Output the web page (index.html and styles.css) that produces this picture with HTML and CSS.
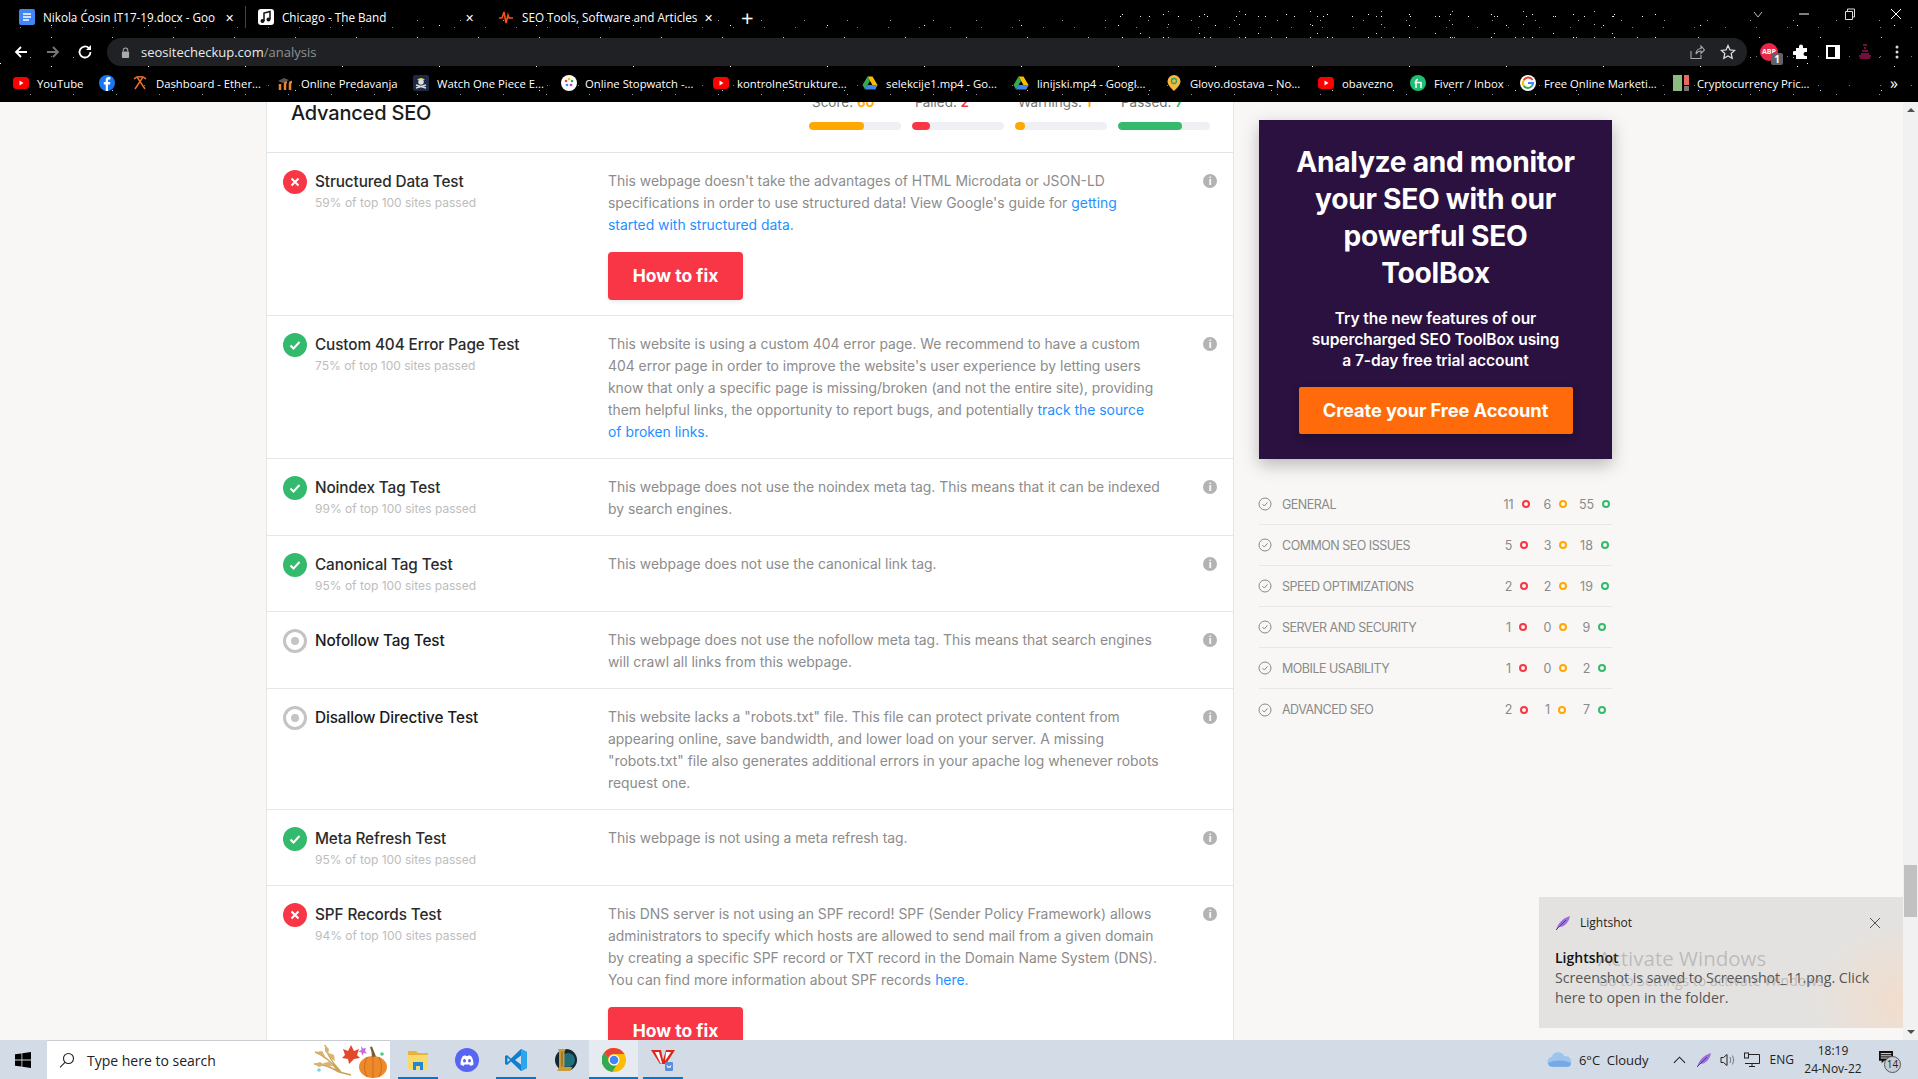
FILE: index.html
```html
<!DOCTYPE html>
<html lang="en">
<head>
  <meta charset="UTF-8" />
  <title>SEO Tools, Software and Articles</title>
  <link rel="stylesheet" href="styles.css">
</head>
<body>
  <!-- Browser chrome -->
  <header class="browser">
    <div class="tabs">
      <div class="tab tab-doc">
        <svg class="fav" viewBox="0 0 16 16"><rect width="16" height="16" rx="2" fill="#4285f4"/><path d="M4 5h8M4 8h8M4 11h6" stroke="#fff" stroke-width="1.4"/></svg>
        <span class="tab-title">Nikola Ćosin IT17-19.docx - Goo</span><span class="tab-x">✕</span>
      </div>
      <div class="tab tab-band">
        <svg class="fav" viewBox="0 0 16 16"><rect width="16" height="16" rx="3" fill="#fff"/><path d="M6 12V4l6-1.500V10" fill="none" stroke="#111" stroke-width="1.500"/><circle cx="4.500" cy="12" r="2" fill="#111"/><circle cx="10.500" cy="10.500" r="2" fill="#111"/></svg>
        <span class="tab-title">Chicago - The Band</span><span class="tab-x">✕</span>
      </div>
      <div class="tab tab-seo">
        <svg class="fav" viewBox="0 0 16 16"><path d="M1 9h3l2-6 2 11 2-8 1 3h4" fill="none" stroke="#f4511e" stroke-width="1.600"/></svg>
        <span class="tab-title">SEO Tools, Software and Articles</span><span class="tab-x">✕</span>
      </div>
      <span class="tab-plus">+</span>
      <div class="win-controls">
        <svg viewBox="0 0 12 12"><path d="M2 4l4 5 4-5" fill="none" stroke="#bbb"/></svg>
        <svg viewBox="0 0 12 12"><path d="M1 6h10" stroke="#fff"/></svg>
        <svg viewBox="0 0 12 12"><path d="M1.500 3.500h7v8h-7zM3.500 3V1h7v8H9" fill="none" stroke="#ddd"/></svg>
        <svg viewBox="0 0 12 12"><path d="M1 1l10 10M11 1L1 11" stroke="#fff"/></svg>
      </div>
    </div>
    <div class="toolbar">
      <svg class="nav" viewBox="0 0 16 16"><path d="M14 8H3M8 3L3 8l5 5" fill="none" stroke="#fff" stroke-width="1.800"/></svg>
      <svg class="nav" viewBox="0 0 16 16"><path d="M2 8h11M8 3l5 5-5 5" fill="none" stroke="#777" stroke-width="1.800"/></svg>
      <svg class="nav" viewBox="0 0 16 16"><path d="M13.500 8a5.500 5.500 0 1 1-1.600-3.900" fill="none" stroke="#fff" stroke-width="1.800"/><path d="M14 1v5H9z" fill="#fff"/></svg>
      <div class="omnibox">
        <svg class="lock" viewBox="0 0 10 12"><path d="M2.500 5V3.500a2.500 2.500 0 0 1 5 0V5" fill="none" stroke="#aaa" stroke-width="1.200"/><rect x="1" y="5" width="8" height="7" rx="1" fill="#aaa"/></svg>
        <span class="url">seositecheckup.com<span class="url-path">/analysis</span></span>
        <svg class="omni-icon" viewBox="0 0 16 16"><path d="M2 7v7.500h10V11M7 10c0-3.500 2.500-5.500 5-5.500V2l3.500 4L12 9.500V7C10 7 8 8 7 10z" fill="none" stroke="#aaa" stroke-width="1.100"/></svg>
        <svg class="omni-icon" viewBox="0 0 16 16"><path d="M8 1.500l2 4.400 4.700.5-3.500 3.200 1 4.700L8 11.900l-4.200 2.400 1-4.700-3.500-3.200 4.700-.5z" fill="none" stroke="#ddd" stroke-width="1.300"/></svg>
      </div>
      <div class="ext-icons">
        <span class="abp">ABP<span class="abp-count">1</span></span>
        <svg viewBox="0 0 16 16"><path d="M6 2.500a2 2 0 0 1 4 0V4h4v4h-1.500a2 2 0 0 0 0 4H14v3H3v-4H1.500a2 2 0 0 1 0-4H3V4h3z" fill="#fff"/></svg>
        <svg viewBox="0 0 16 16"><path d="M1 1h14v14H1z" fill="#fff"/><path d="M3 3h7v10H3z" fill="#000"/></svg>
        <svg viewBox="0 0 16 16"><path d="M6 1h4M7 4h2M5 7h6M4 10h8M2 12h12M3 14h10" stroke="#9a1256" stroke-width="1.300"/></svg>
        <svg viewBox="0 0 16 16"><circle cx="8" cy="3" r="1.500" fill="#ddd"/><circle cx="8" cy="8" r="1.500" fill="#ddd"/><circle cx="8" cy="13" r="1.500" fill="#ddd"/></svg>
      </div>
    </div>
    <nav class="bookmarks">
      <span class="bm bm-yt"><svg viewBox="0 0 16 16"><rect y="2" width="16" height="12" rx="3.500" fill="#f00"/><path d="M6.500 5.500l4 2.500-4 2.500z" fill="#fff"/></svg>YouTube</span>
      <span class="bm bm-fb"><svg viewBox="0 0 16 16"><circle cx="8" cy="8" r="8" fill="#1877f2"/><path d="M9 16V9.500h2l.4-2.500H9V5.600c0-.8.300-1.200 1.200-1.200h1.200V2.200C11 2.100 10.400 2 9.800 2 8 2 6.700 3.100 6.700 5.200V7H4.800v2.500h1.900V16z" fill="#fff"/></svg></span>
      <span class="bm bm-eth"><svg viewBox="0 0 16 16"><path d="M3 14L11 2M13 14L5 2M2 4q3-3 6-2M14 4q-3-3-6-2" fill="none" stroke="#e8702a" stroke-width="1.500"/></svg>Dashboard - Ether...</span>
      <span class="bm bm-moodle"><svg viewBox="0 0 16 16"><path d="M3 15V9M8 15V9q0-2 2-2M13 15V9q0-2 2-2" fill="none" stroke="#e8842a" stroke-width="2.500"/><path d="M1 6l6-3 5 2-6 3z" fill="#555"/></svg>Online Predavanja</span>
      <span class="bm bm-op"><svg viewBox="0 0 16 16"><rect width="16" height="16" rx="2" fill="#1d2a44"/><path d="M4 5q4-4 8 0z" fill="#e9d44a"/><circle cx="8" cy="7" r="2.800" fill="#ddd"/><path d="M3 13l10-3M13 13L3 10" stroke="#ddd" stroke-width="1.500"/></svg>Watch One Piece E...</span>
      <span class="bm bm-stop"><svg viewBox="0 0 16 16"><circle cx="8" cy="8" r="8" fill="#fff"/><circle cx="5" cy="6" r="1.300" fill="#e94235"/><circle cx="8" cy="4" r="1.300" fill="#fbbc04"/><circle cx="11" cy="6" r="1.300" fill="#34a853"/><circle cx="6" cy="10" r="1.300" fill="#4285f4"/><circle cx="10" cy="10" r="1.300" fill="#a142f4"/></svg>Online Stopwatch -...</span>
      <span class="bm bm-yt2"><svg viewBox="0 0 16 16"><rect y="2" width="16" height="12" rx="3.500" fill="#f00"/><path d="M6.500 5.500l4 2.500-4 2.500z" fill="#fff"/></svg>kontrolneStrukture...</span>
      <span class="bm bm-drive"><svg viewBox="0 0 16 16"><path d="M5.500 1.500h5L15.500 10l-2.500 4.500z" fill="#fbbc04"/><path d="M5.500 1.500L.5 10 3 14.500 8 6z" fill="#34a853"/><path d="M3 14.500h10L15.500 10h-10z" fill="#4285f4"/></svg>selekcije1.mp4 - Go...</span>
      <span class="bm bm-drive2"><svg viewBox="0 0 16 16"><path d="M5.500 1.500h5L15.500 10l-2.500 4.500z" fill="#fbbc04"/><path d="M5.500 1.500L.5 10 3 14.500 8 6z" fill="#34a853"/><path d="M3 14.500h10L15.500 10h-10z" fill="#4285f4"/></svg>linijski.mp4 - Googl...</span>
      <span class="bm bm-glovo"><svg viewBox="0 0 16 16"><path d="M8 0a6.500 6.500 0 0 1 6.500 6.500C14.500 10.500 8 16 8 16S1.500 10.500 1.500 6.500A6.500 6.500 0 0 1 8 0z" fill="#f6b93b"/><circle cx="8" cy="6" r="2.500" fill="none" stroke="#2aa36b" stroke-width="1.300"/></svg>Glovo.dostava – No...</span>
      <span class="bm bm-yt3"><svg viewBox="0 0 16 16"><rect y="2" width="16" height="12" rx="3.500" fill="#f00"/><path d="M6.500 5.500l4 2.500-4 2.500z" fill="#fff"/></svg>obavezno</span>
      <span class="bm bm-fiverr"><svg viewBox="0 0 16 16"><circle cx="8" cy="8" r="8" fill="#1dbf73"/><path d="M6 13V6.500q0-2 2-2M4.500 7.500H11M11 7v6" fill="none" stroke="#fff" stroke-width="1.500"/></svg>Fiverr / Inbox</span>
      <span class="bm bm-google"><svg viewBox="0 0 16 16"><circle cx="8" cy="8" r="8" fill="#fff"/><path d="M12.500 5A5 5 0 0 0 3.800 5.200" fill="none" stroke="#ea4335" stroke-width="2"/><path d="M3.800 5.200a5 5 0 0 0 0 5.600" fill="none" stroke="#fbbc04" stroke-width="2"/><path d="M3.800 10.800a5 5 0 0 0 8 .2" fill="none" stroke="#34a853" stroke-width="2"/><path d="M8 8h5a5 5 0 0 1-1.200 3" fill="none" stroke="#4285f4" stroke-width="2"/></svg>Free Online Marketi...</span>
      <span class="bm bm-crypto"><svg viewBox="0 0 16 16"><rect width="9" height="16" fill="#8dbb7e"/><rect x="11" width="5" height="10" fill="#e9695f"/><rect x="11" y="11" width="5" height="5" fill="#777"/></svg>Cryptocurrency Pric...</span>
      <span class="bm-more">»</span>
    </nav>
  </header>

  <div class="viewport">
    <main class="page">
      <section class="results">
        <div class="results-head">
          <h2>Advanced SEO</h2>
          <div class="score-bars">
            <div class="score"><span class="score-label">Score: <b class="c-warn">60</b></span><div class="bar"><div class="fill bg-warn" style="width: 60%"></div></div></div>
            <div class="score"><span class="score-label">Failed: <b class="c-fail">2</b></span><div class="bar"><div class="fill bg-fail" style="width: 20%"></div></div></div>
            <div class="score"><span class="score-label">Warnings: <b class="c-warn">1</b></span><div class="bar"><div class="fill bg-warn" style="width: 11%"></div></div></div>
            <div class="score"><span class="score-label">Passed: <b class="c-pass">7</b></span><div class="bar"><div class="fill bg-pass" style="width: 70%"></div></div></div>
          </div>
        </div>

        <article class="test">
          <svg class="status" viewBox="0 0 24 24"><circle cx="12" cy="12" r="12" fill="#f93645"/><path d="M8.500 8.500l7 7M15.500 8.500l-7 7" stroke="#fff" stroke-width="2"/></svg>
          <div class="test-name"><h3>Structured Data Test</h3><p>59% of top 100 sites passed</p></div>
          <div class="test-desc">
            <p>This webpage doesn't take the advantages of HTML Microdata or JSON-LD<br>specifications in order to use structured data! View Google's guide for <a>getting<br>started with structured data.</a></p>
            <span class="fix-btn">How to fix</span>
          </div>
          <span class="info">i</span>
        </article>

        <article class="test">
          <svg class="status" viewBox="0 0 24 24"><circle cx="12" cy="12" r="12" fill="#33ba6d"/><path d="M7.500 12.500l3 3 6-6.500" fill="none" stroke="#fff" stroke-width="2"/></svg>
          <div class="test-name"><h3>Custom 404 Error Page Test</h3><p>75% of top 100 sites passed</p></div>
          <div class="test-desc">
            <p>This website is using a custom 404 error page. We recommend to have a custom<br>404 error page in order to improve the website's user experience by letting users<br>know that only a specific page is missing/broken (and not the entire site), providing<br>them helpful links, the opportunity to report bugs, and potentially <a>track the source<br>of broken links.</a></p>
          </div>
          <span class="info">i</span>
        </article>

        <article class="test">
          <svg class="status" viewBox="0 0 24 24"><circle cx="12" cy="12" r="12" fill="#33ba6d"/><path d="M7.500 12.500l3 3 6-6.500" fill="none" stroke="#fff" stroke-width="2"/></svg>
          <div class="test-name"><h3>Noindex Tag Test</h3><p>99% of top 100 sites passed</p></div>
          <div class="test-desc">
            <p>This webpage does not use the noindex meta tag. This means that it can be indexed<br>by search engines.</p>
          </div>
          <span class="info">i</span>
        </article>

        <article class="test">
          <svg class="status" viewBox="0 0 24 24"><circle cx="12" cy="12" r="12" fill="#33ba6d"/><path d="M7.500 12.500l3 3 6-6.500" fill="none" stroke="#fff" stroke-width="2"/></svg>
          <div class="test-name"><h3>Canonical Tag Test</h3><p>95% of top 100 sites passed</p></div>
          <div class="test-desc">
            <p>This webpage does not use the canonical link tag.</p>
          </div>
          <span class="info">i</span>
        </article>

        <article class="test test-plain">
          <svg class="status" viewBox="0 0 24 24"><circle cx="12" cy="12" r="10.500" fill="none" stroke="#c4c4c4" stroke-width="3"/><circle cx="12" cy="12" r="4" fill="#c4c4c4"/></svg>
          <div class="test-name"><h3>Nofollow Tag Test</h3></div>
          <div class="test-desc">
            <p>This webpage does not use the nofollow meta tag. This means that search engines<br>will crawl all links from this webpage.</p>
          </div>
          <span class="info">i</span>
        </article>

        <article class="test test-plain">
          <svg class="status" viewBox="0 0 24 24"><circle cx="12" cy="12" r="10.500" fill="none" stroke="#c4c4c4" stroke-width="3"/><circle cx="12" cy="12" r="4" fill="#c4c4c4"/></svg>
          <div class="test-name"><h3>Disallow Directive Test</h3></div>
          <div class="test-desc">
            <p>This website lacks a "robots.txt" file. This file can protect private content from<br>appearing online, save bandwidth, and lower load on your server. A missing<br>"robots.txt" file also generates additional errors in your apache log whenever robots<br>request one.</p>
          </div>
          <span class="info">i</span>
        </article>

        <article class="test">
          <svg class="status" viewBox="0 0 24 24"><circle cx="12" cy="12" r="12" fill="#33ba6d"/><path d="M7.500 12.500l3 3 6-6.500" fill="none" stroke="#fff" stroke-width="2"/></svg>
          <div class="test-name"><h3>Meta Refresh Test</h3><p>95% of top 100 sites passed</p></div>
          <div class="test-desc">
            <p>This webpage is not using a meta refresh tag.</p>
          </div>
          <span class="info">i</span>
        </article>

        <article class="test">
          <svg class="status" viewBox="0 0 24 24"><circle cx="12" cy="12" r="12" fill="#f93645"/><path d="M8.500 8.500l7 7M15.500 8.500l-7 7" stroke="#fff" stroke-width="2"/></svg>
          <div class="test-name"><h3>SPF Records Test</h3><p>94% of top 100 sites passed</p></div>
          <div class="test-desc">
            <p>This DNS server is not using an SPF record! SPF (Sender Policy Framework) allows<br>administrators to specify which hosts are allowed to send mail from a given domain<br>by creating a specific SPF record or TXT record in the Domain Name System (DNS).<br>You can find more information about SPF records <a>here.</a></p>
            <span class="fix-btn">How to fix</span>
          </div>
          <span class="info">i</span>
        </article>
      </section>

      <aside class="sidebar">
        <div class="promo">
          <h2>Analyze and monitor<br>your SEO with our<br>powerful SEO<br>ToolBox</h2>
          <p>Try the new features of our<br>supercharged SEO ToolBox using<br>a 7-day free trial account</p>
          <span class="promo-btn">Create your Free Account</span>
        </div>
        <ul class="cats">
          <li class="cat"><svg viewBox="0 0 14 14"><circle cx="7" cy="7" r="6" fill="none" stroke="#888"/><path d="M4.500 7.200l1.800 1.800 3.200-3.600" fill="none" stroke="#888"/></svg><span class="cat-name">GENERAL</span><div class="counts"><span class="count">11<i class="ring r-fail"></i></span><span class="count">6<i class="ring r-warn"></i></span><span class="count">55<i class="ring r-pass"></i></span></div></li>
          <li class="cat"><svg viewBox="0 0 14 14"><circle cx="7" cy="7" r="6" fill="none" stroke="#888"/><path d="M4.500 7.200l1.800 1.800 3.200-3.600" fill="none" stroke="#888"/></svg><span class="cat-name">COMMON SEO ISSUES</span><div class="counts"><span class="count">5<i class="ring r-fail"></i></span><span class="count">3<i class="ring r-warn"></i></span><span class="count">18<i class="ring r-pass"></i></span></div></li>
          <li class="cat"><svg viewBox="0 0 14 14"><circle cx="7" cy="7" r="6" fill="none" stroke="#888"/><path d="M4.500 7.200l1.800 1.800 3.200-3.600" fill="none" stroke="#888"/></svg><span class="cat-name">SPEED OPTIMIZATIONS</span><div class="counts"><span class="count">2<i class="ring r-fail"></i></span><span class="count">2<i class="ring r-warn"></i></span><span class="count">19<i class="ring r-pass"></i></span></div></li>
          <li class="cat"><svg viewBox="0 0 14 14"><circle cx="7" cy="7" r="6" fill="none" stroke="#888"/><path d="M4.500 7.200l1.800 1.800 3.200-3.600" fill="none" stroke="#888"/></svg><span class="cat-name">SERVER AND SECURITY</span><div class="counts"><span class="count">1<i class="ring r-fail"></i></span><span class="count">0<i class="ring r-warn"></i></span><span class="count">9<i class="ring r-pass"></i></span></div></li>
          <li class="cat"><svg viewBox="0 0 14 14"><circle cx="7" cy="7" r="6" fill="none" stroke="#888"/><path d="M4.500 7.200l1.800 1.800 3.200-3.600" fill="none" stroke="#888"/></svg><span class="cat-name">MOBILE USABILITY</span><div class="counts"><span class="count">1<i class="ring r-fail"></i></span><span class="count">0<i class="ring r-warn"></i></span><span class="count">2<i class="ring r-pass"></i></span></div></li>
          <li class="cat"><svg viewBox="0 0 14 14"><circle cx="7" cy="7" r="6" fill="none" stroke="#888"/><path d="M4.500 7.200l1.800 1.800 3.200-3.600" fill="none" stroke="#888"/></svg><span class="cat-name">ADVANCED SEO</span><div class="counts"><span class="count">2<i class="ring r-fail"></i></span><span class="count">1<i class="ring r-warn"></i></span><span class="count">7<i class="ring r-pass"></i></span></div></li>
        </ul>
      </aside>
    </main>

    <div class="scrollbar">
      <span class="arrow-up"></span>
      <div class="track"><div class="thumb"></div></div>
      <span class="arrow-down"></span>
    </div>

    <!-- Windows toast and watermark sit over the page -->
    <div class="toast">
      <div class="toast-head">
        <svg viewBox="0 0 16 16"><path d="M1 15C3 8 8 3 15 1c-1 6-5 11-11 11z" fill="#9b6fd8"/><path d="M1 15L11 5" stroke="#5d2fa3"/></svg>
        <span>Lightshot</span>
        <svg class="toast-x" viewBox="0 0 10 10"><path d="M0 0l10 10M10 0L0 10" stroke="#555"/></svg>
      </div>
      <strong>Lightshot</strong>
      <p>Screenshot is saved to Screenshot_11.png. Click<br>here to open in the folder.</p>
    </div>
    <div class="watermark">
      <div class="wm-title">Activate Windows</div>
      <div class="wm-sub">Go to Settings to activate Windows.</div>
    </div>
  </div>

  <footer class="taskbar">
    <svg class="start" viewBox="0 0 16 16"><path d="M0 2.300l6.500-.9v6.200H0zM7.300 1.300L16 0v7.600H7.300zM0 8.400h6.500v6.200L0 13.700zM7.300 8.400H16V16l-8.700-1.300z" fill="#000"/></svg>
    <div class="search">
      <svg viewBox="0 0 16 16"><circle cx="9.500" cy="6.500" r="5" fill="none" stroke="#222" stroke-width="1.100"/><path d="M6 10.300L1 15.300" stroke="#222" stroke-width="1.100"/></svg>
      <span>Type here to search</span>
      <svg class="search-art" viewBox="0 0 74 36">
        <path d="M2 10q12 4 24 20M12 3q2 12 16 27M1 22q12 0 25 8M26 30l12 3" stroke="#c9a25c" stroke-width="1.500" fill="none"/>
        <path d="M3 10l6-1 3 5-6-1zM12 3l4 4-1 6-3-4zM16 11l5 2 1 6-5-3zM1 22l6-2 5 3-6 2zM10 21l6-1 4 4-6 1z" fill="#d9b36c"/>
        <path d="M36 22l-1-5-6-1 3-3-2-6 5 2 3-6 3 6 5-2-2 6 3 3-6 1z" fill="#e2492c"/>
        <path d="M48 4l2 2.500 3-.5-1 3 2 2.500-3-.5-2 2.500-.5-3-3-1 3-1.500z" fill="#c86be0"/>
        <circle cx="69" cy="12" r="1.800" fill="#4fc98a"/>
        <circle cx="6" cy="28" r="1.800" fill="#6fd6e6"/>
        <ellipse cx="60" cy="25" rx="14" ry="11" fill="#ee8a2c"/>
        <path d="M54 15q-5 10 0 20M66 15q5 10 0 20M60 14v22" stroke="#cf6d17" fill="none"/>
        <path d="M59 15q0-5-2-10l2-.5q2 5 4 10z" fill="#7a5a3a"/>
      </svg>
    </div>
    <div class="apps">
      <span class="app open"><svg viewBox="0 0 24 24"><path d="M2 3h8l2 2h10v17H2z" fill="#e8b33a"/><path d="M2 7h20v15H2z" fill="#fbd96b"/><path d="M7 22v-8h10v8h-3v-4h-4v4z" fill="#1e88d6"/></svg></span>
      <span class="app"><svg viewBox="0 0 24 24"><circle cx="12" cy="12" r="12" fill="#5865f2"/><path d="M5.500 16.500c0-4 1-6.800 2.500-8.500 1-.4 2-.6 2.500-.7l.4.7h2.200l.4-.7c.5.100 1.500.3 2.500.7 1.500 1.700 2.500 4.500 2.500 8.500-1 .8-2.200 1.200-3.300 1.300l-.7-1.300H9.500l-.7 1.300c-1.100-.1-2.300-.5-3.300-1.300z" fill="#fff"/><ellipse cx="9.500" cy="12.800" rx="1.500" ry="1.700" fill="#5865f2"/><ellipse cx="14.500" cy="12.800" rx="1.500" ry="1.700" fill="#5865f2"/></svg></span>
      <span class="app open"><svg viewBox="0 0 24 24"><path d="M17 1l6 3v16l-6 3-10-9.500L3 17l-2-1V8l2-1 4 3.500z" fill="#0f7fcc"/><path d="M17 1l6 3v16l-6 3z" fill="#2aa5ee"/><path d="M17 7.500L11 12l6 4.500z" fill="#d3dbe6"/><path d="M3.500 9.500L6 12l-2.500 2.500z" fill="#d3dbe6"/></svg></span>
      <span class="app"><svg viewBox="0 0 24 24"><circle cx="13" cy="12" r="11" fill="#14282f"/><circle cx="15" cy="12" r="7" fill="#1f6f7e"/><path d="M5 1h8l-1.500 2.500V19h8L17 23H4l2-3.500V3.500z" fill="#c89b3c"/><path d="M8.500 3.500h1v15h-1z" fill="#7a5a1e"/></svg></span>
      <span class="app open active"><svg viewBox="0 0 24 24"><circle cx="12" cy="12" r="12" fill="#fbbc04"/><path d="M12 0a12 12 0 0 1 10.400 6H12a6 6 0 0 0-5.800 4.500L2.200 4.500A12 12 0 0 1 12 0z" fill="#ea4335"/><path d="M2.200 4.500A12 12 0 0 0 10.300 23.900L14.500 17a6 6 0 0 1-8.300-6.500z" fill="#34a853"/><circle cx="12" cy="12" r="5.500" fill="#fff"/><circle cx="12" cy="12" r="4.300" fill="#4285f4"/></svg></span>
      <span class="app open"><svg viewBox="0 0 24 24"><path d="M0 2h10l2 10 3-10h9l-9 14h-6z" fill="#e2231a"/><path d="M4 4h4l3 11-1 1z" fill="#fff"/><path d="M15 4h5l-6 9z" fill="#fff"/><rect x="14" y="14" width="8" height="9" rx="1" fill="#5b8dd9"/><path d="M16 17l1 3 1-2 1 2 1-3" fill="none" stroke="#fff" stroke-width=".8"/></svg></span>
    </div>
    <div class="tray">
      <svg class="tray-cloud" viewBox="0 0 26 16"><path d="M6 15a5 5 0 0 1-1-10 7 7 0 0 1 13-1 5.500 5.500 0 0 1 3 11z" fill="#9cc4ec"/><path d="M1 11q12-5 24 0a4 4 0 0 1-4 4H6a5 5 0 0 1-5-4z" fill="#74a9e3"/></svg>
      <span class="weather">6°C&nbsp; Cloudy</span>
      <svg class="tray-icon chevron" viewBox="0 0 14 14"><path d="M1 10l6-6 6 6" fill="none" stroke="#222" stroke-width="1.200"/></svg>
      <svg class="tray-icon" viewBox="0 0 16 16"><path d="M1 15C3 8 8 3 15 1c-1 6-5 11-11 11z" fill="#9b6fd8"/><path d="M1 15L11 5" stroke="#5d2fa3"/></svg>
      <svg class="tray-icon" viewBox="0 0 16 16"><path d="M1 5.500h2.500L7 2.500v11L3.500 10.500H1z" fill="none" stroke="#222"/><path d="M10 5q1.500 3 0 6M12.500 3.500q2.500 4.500 0 9" fill="none" stroke="#777"/></svg>
      <svg class="tray-icon" viewBox="0 0 16 16"><path d="M4 2.500h11.500v9H1M8 11.500v3M5 14.500h6" fill="none" stroke="#222"/><rect x="0.500" y="1" width="4" height="5" fill="none" stroke="#222"/></svg>
      <span class="lang">ENG</span>
      <div class="clock"><span>18:19</span><span>24-Nov-22</span></div>
      <div class="notif">
        <svg viewBox="0 0 16 16"><path d="M0 0h16v11H6l-3 3v-3H0z" fill="#111"/><path d="M2 3h12M2 5.500h12M2 8h8" stroke="#fff"/></svg>
        <span class="notif-badge">14</span>
      </div>
    </div>
  </footer>
</body>
</html>
```
FILE: styles.css
```css
* {
  box-sizing: border-box;
}
html, body {
  height: 100%;
}
body {
  margin: 0;
  display: flex;
  flex-direction: column;
  overflow: hidden;
  font-family: Inter, "Liberation Sans", sans-serif;
  background: #f8f7f5;
}
h2, h3, p, ul {
  margin: 0;
  padding: 0;
}

/* browser chrome */
.browser {
  position: relative;
  height: 102px;
  flex: none;
  color: #fff;
  font-family: "Open Sans", "Liberation Sans", sans-serif;
  font-size: 11.3px;
  background-color: #000;
  background-image:
    radial-gradient(circle, #fff 0.6px, transparent 1px),
    radial-gradient(circle, #b9c7ff 0.6px, transparent 1px),
    radial-gradient(circle, #99a 0.5px, transparent 1px),
    radial-gradient(circle, #778 0.5px, transparent 1px),
    radial-gradient(circle, #fff 0.5px, transparent 1px);
  background-size: 97px 41px, 61px 53px, 43px 37px, 31px 29px, 139px 67px;
  background-position: 3px 5px, 21px 11px, 9px 2px, 5px 13px, 70px 30px;
}
/* the stars get denser above the toolbar on the right */
.browser::before {
  content: "";
  position: absolute;
  left: 1100px;
  top: 0;
  width: 560px;
  height: 38px;
  background-image:
    radial-gradient(circle, #fff 0.6px, transparent 1px),
    radial-gradient(circle, #dde 0.5px, transparent 1px),
    radial-gradient(circle, #fff 0.5px, transparent 1px),
    radial-gradient(circle, #bbc 0.5px, transparent 1px);
  background-size: 41px 23px, 59px 17px, 29px 31px, 71px 13px;
  background-position: 2px 3px, 11px 8px, 6px 1px, 33px 5px;
}
.tabs, .toolbar, .bookmarks {
  position: relative;
}
.tabs {
  height: 34px;
  display: flex;
  align-items: center;
}
.tab {
  display: flex;
  align-items: center;
  height: 34px;
  width: 239px;
  padding-left: 13px;
}
.tab-doc {
  width: 246px;
  height: 22px;
  padding-left: 19px;
  border-right: 1px solid #444;
}
.tab-band {
  padding-left: 12px;
}
.fav {
  width: 16px;
  height: 16px;
  flex: none;
  margin-right: 8px;
}
.tab-title {
  flex: 1;
  white-space: nowrap;
  overflow: hidden;
  font-size: 11.7px;
}
.tab-x {
  width: 12px;
  margin: 0 10px 0 4px;
  font-size: 11px;
  text-align: center;
}
.tab-plus {
  margin-left: 17px;
  font-size: 22px;
  line-height: 1;
}
.win-controls {
  margin-left: auto;
  display: flex;
  gap: 34px;
  padding-right: 16px;
  margin-top: -6px;
}
.win-controls svg {
  width: 12px;
  height: 12px;
}
.toolbar {
  height: 34px;
  display: flex;
  align-items: center;
  padding: 2px 0 0 13px;
}
.nav {
  width: 16px;
  height: 16px;
  margin-right: 16px;
}
.omnibox {
  width: 1640px;
  height: 28px;
  margin-left: -2px;
  padding: 0 11px 0 14px;
  display: flex;
  align-items: center;
  background: #202124;
  border-radius: 14px;
}
.lock {
  width: 9px;
  height: 11px;
  margin-right: 11px;
}
.url {
  flex: 1;
  font-size: 13px;
  color: #e8eaed;
}
.url-path {
  color: #8f9296;
}
.omni-icon {
  width: 16px;
  height: 16px;
  margin-left: 15px;
}
.ext-icons {
  display: flex;
  align-items: center;
  gap: 16px;
  margin-left: 13px;
}
.ext-icons svg {
  width: 16px;
  height: 16px;
}
.abp {
  position: relative;
  width: 18px;
  height: 18px;
  margin-right: -1px;
  border-radius: 50%;
  background: #e8274b;
  font-size: 7px;
  font-weight: 700;
  line-height: 17px;
  text-align: center;
}
.abp-count {
  position: absolute;
  left: 11px;
  top: 10px;
  width: 12px;
  height: 12px;
  background: #5f6368;
  font-size: 10px;
  line-height: 12px;
  border-radius: 2px;
}
.bookmarks {
  height: 30px;
  display: flex;
  align-items: center;
  padding-left: 13px;
  white-space: nowrap;
}
.bm {
  display: flex;
  align-items: center;
  flex: none;
}
.bm svg {
  width: 16px;
  height: 16px;
  margin-right: 8px;
  flex: none;
}
.bm-yt { width: 86px; }
.bm-fb { width: 33px; }
.bm-eth { width: 145px; }
.bm-moodle { width: 136px; }
.bm-op { width: 148px; }
.bm-stop { width: 152px; }
.bm-yt2 { width: 149px; }
.bm-drive { width: 151px; }
.bm-drive2 { width: 153px; }
.bm-glovo { width: 152px; }
.bm-yt3 { width: 92px; }
.bm-fiverr { width: 110px; }
.bm-google { width: 153px; }
.bm-crypto { width: 217px; }
.bm-more {
  font-size: 16px;
}

/* page */
.viewport {
  position: relative;
  flex: 1;
  min-height: 0;
  display: flex;
  overflow: hidden;
}
.page {
  flex: 1;
  display: flex;
  align-items: flex-start;
  padding-left: 266px;
  overflow: hidden;
}
.results {
  width: 968px;
  flex: none;
  background: #fff;
  border-left: 1px solid #e6e6e6;
  border-right: 1px solid #e6e6e6;
}
.results-head {
  height: 51px;
  display: flex;
  justify-content: space-between;
  border-bottom: 1px solid #dfe4e8;
  padding: 0 23px 0 24px;
}
.results-head h2 {
  font-size: 20px;
  font-weight: 500;
  line-height: 23px;
  color: #1b1b1b;
  letter-spacing: -0.2px;
}
.score-bars {
  display: flex;
  gap: 11px;
}
.score {
  width: 92px;
}
/* the list is scrolled, so these labels sit half above the fold */
.score-label {
  display: block;
  margin: -8px 0 0 3px;
  height: 28px;
  font-size: 13.5px;
  line-height: 16px;
  color: #777;
  white-space: nowrap;
}
.score-label b {
  font-weight: 600;
}
.c-warn { color: #ffa800; }
.c-fail { color: #f93645; }
.c-pass { color: #33ba6d; }
.bg-warn { background: #ffa800; }
.bg-fail { background: #f93645; }
.bg-pass { background: #33ba6d; }
.bar {
  height: 8px;
  background: #eef0f4;
  border-radius: 4px;
  overflow: hidden;
}
.fill {
  height: 100%;
  border-radius: 4px;
}
.test {
  display: flex;
  padding: 17px 16px 15px 16px;
  border-bottom: 1px solid #e3e7ea;
}
.status {
  width: 24px;
  height: 24px;
  flex: none;
  margin-right: 8px;
}
.test-name {
  width: 293px;
  flex: none;
  padding-bottom: 1px;
}
.test-name h3 {
  font-size: 15.3px;
  font-weight: 500;
  line-height: 24px;
  color: #2b2b2b;
  letter-spacing: -0.1px;
}
.test-plain .test-name h3 {
  color: #1b1b1b;
}
.test-name p {
  font-size: 12px;
  line-height: 18px;
  color: #bdbdbd;
}
.test-desc {
  flex: 1;
  font-size: 13.9px;
  line-height: 22px;
  color: #8c8c8c;
  white-space: nowrap;
}
.test-desc a {
  color: #1e90ff;
}
.fix-btn {
  display: block;
  width: 135px;
  height: 48px;
  margin: 16px 0 0;
  background: #f93645;
  color: #fff;
  border-radius: 4px;
  font-size: 17.5px;
  font-weight: 700;
  line-height: 48px;
  text-align: center;
  box-shadow: 0 2px 4px rgba(0, 0, 0, 0.08);
}
.info {
  width: 14px;
  height: 14px;
  flex: none;
  margin: 4px 0 0 10px;
  border-radius: 50%;
  background: #b3b3b3;
  color: #fff;
  font-size: 10px;
  font-weight: 700;
  line-height: 14px;
  text-align: center;
}

/* sidebar */
.sidebar {
  width: 353px;
  flex: none;
  margin: 18px 0 0 25px;
}
.promo {
  height: 339px;
  padding: 24px 24px 0;
  background: #2a1140;
  color: #fff;
  text-align: center;
  box-shadow: 0 6px 16px rgba(0, 0, 0, 0.25);
}
.promo h2 {
  font-size: 28.2px;
  font-weight: 700;
  line-height: 37px;
  letter-spacing: -0.3px;
}
.promo p {
  margin: 16px 0 0;
  font-size: 15.6px;
  font-weight: 600;
  line-height: 21px;
  letter-spacing: -0.1px;
}
.promo-btn {
  display: block;
  width: 274px;
  height: 47px;
  margin: 16px auto 0 auto;
  background: #ff6b0a;
  border-radius: 2px;
  font-size: 18.3px;
  font-weight: 700;
  line-height: 47px;
  letter-spacing: -0.1px;
  box-shadow: 0 4px 10px rgba(0, 0, 0, 0.25);
}
.cats {
  list-style: none;
  margin-top: 25px;
}
.cat {
  display: flex;
  align-items: center;
  height: 41px;
  border-bottom: 1px solid #e8e7e5;
  font-size: 12.5px;
  color: #8a8a8a;
}
.cat:last-child {
  border-bottom: none;
}
.cat svg {
  width: 14px;
  height: 14px;
  flex: none;
  margin: 0 10px 0 -1px;
}
.cat-name {
  flex: 1;
  letter-spacing: -0.5px;
}
.counts {
  display: flex;
  width: 117px;
  margin-right: -2px;
}
.count {
  width: 39px;
  display: flex;
  justify-content: center;
  align-items: center;
  gap: 8px;
}
.ring {
  width: 8px;
  height: 8px;
  border-radius: 50%;
  border: 2px solid;
}
.r-fail { border-color: #f93645; }
.r-warn { border-color: #ffa800; }
.r-pass { border-color: #33ba6d; }

/* scrollbar */
.scrollbar {
  width: 15px;
  flex: none;
  display: flex;
  flex-direction: column;
  background: #f1f1f1;
}
.track {
  flex: 1;
  position: relative;
}
.thumb {
  position: absolute;
  top: 747px;
  left: 1px;
  right: 1px;
  height: 52px;
  background: #c1c1c1;
}
.arrow-up, .arrow-down {
  height: 16px;
  flex: none;
  display: flex;
  align-items: center;
  justify-content: center;
}
.arrow-up::before {
  content: "";
  border: 4px solid transparent;
  border-top: none;
  border-bottom: 4px solid #505050;
}
.arrow-down::before {
  content: "";
  border: 4px solid transparent;
  border-bottom: none;
  border-top: 4px solid #505050;
}

/* windows toast */
.toast {
  position: absolute;
  left: 1539px;
  top: 795px;
  width: 364px;
  height: 131px;
  padding: 16px 16px 0 16px;
  font-family: "Open Sans", "Liberation Sans", sans-serif;
  color: #555;
  font-size: 14.2px;
  line-height: 20px;
  background:
    radial-gradient(ellipse 90px 80px at 100% 80%, #f2ddcc, transparent),
    #e4e2e0;
}
.toast-head {
  display: flex;
  align-items: center;
  height: 20px;
  margin-bottom: 15px;
  font-size: 12px;
  color: #222;
}
.toast-head svg {
  width: 16px;
  height: 16px;
  margin-right: 9px;
}
.toast-head .toast-x {
  width: 10px;
  height: 10px;
  margin: 0 7px 0 auto;
}
.toast strong {
  display: block;
  font-size: 14px;
  font-weight: 600;
  color: #111;
}
.toast p {
  margin: 0;
}
.watermark {
  position: absolute;
  left: 1598px;
  top: 843px;
  font-family: "Open Sans", "Liberation Sans", sans-serif;
  color: rgba(120, 120, 120, 0.38);
  pointer-events: none;
}
.wm-title {
  font-size: 20.5px;
  line-height: 26px;
}
.wm-sub {
  font-size: 14px;
  line-height: 20px;
}

/* taskbar */
.taskbar {
  height: 39px;
  flex: none;
  display: flex;
  align-items: center;
  background: #d3dbe6;
  font-family: "Open Sans", "Liberation Sans", sans-serif;
  color: #222;
}
.start {
  width: 16px;
  height: 16px;
  margin: 0 16px 0 15px;
}
.search {
  width: 343px;
  height: 39px;
  display: flex;
  align-items: center;
  padding: 0 3px 0 12px;
  background: #fff;
  border-top: 1px solid #c9ccd1;
  font-size: 14px;
}
.search svg {
  width: 16px;
  height: 16px;
  margin-right: 12px;
}
.search span {
  flex: 1;
}
.search .search-art {
  width: 74px;
  height: 36px;
  margin: 0;
}
.apps {
  display: flex;
  margin-left: 3px;
}
.app {
  position: relative;
  width: 49px;
  height: 39px;
  display: flex;
  align-items: center;
  justify-content: center;
}
.app.open::after {
  content: "";
  position: absolute;
  left: 5px;
  right: 4px;
  bottom: 0;
  height: 2px;
  background: #0078d4;
}
.app.active {
  background: #e6ebf1;
}
.app.active::after {
  left: 0;
  right: 0;
}
.app svg {
  width: 24px;
  height: 24px;
}
.tray {
  margin-left: auto;
  display: flex;
  align-items: center;
  height: 39px;
  font-size: 13px;
}
.tray-cloud {
  width: 25px;
  height: 16px;
  margin-right: 7px;
}
.weather {
  margin-right: 24px;
  font-size: 13px;
}
.tray-icon {
  width: 16px;
  height: 16px;
  margin-right: 8px;
}
.chevron {
  width: 13px;
  margin-right: 10px;
}
.lang {
  margin-left: 2px;
  font-size: 12px;
}
.clock {
  display: flex;
  flex-direction: column;
  align-items: center;
  width: 72px;
  margin-left: 3px;
  font-size: 12px;
  line-height: 18px;
}
.notif {
  position: relative;
  width: 18px;
  height: 18px;
  margin: 0 22px 0 9px;
}
.notif svg {
  width: 16px;
  height: 14px;
}
.notif-badge {
  position: absolute;
  left: 6px;
  top: 5px;
  width: 17px;
  height: 17px;
  border: 1px solid #555;
  border-radius: 50%;
  background: #c8ced6;
  font-size: 10px;
  line-height: 15px;
  text-align: center;
}
```
